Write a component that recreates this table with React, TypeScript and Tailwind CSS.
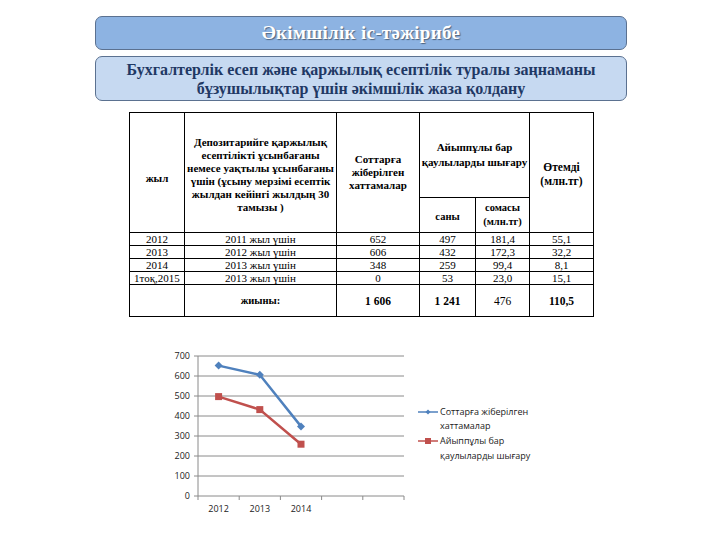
import React from "react";

const rows = [
  ["2012", "2011 жыл үшін", "652", "497", "181,4", "55,1"],
  ["2013", "2012 жыл үшін", "606", "432", "172,3", "32,2"],
  ["2014", "2013 жыл үшін", "348", "259", "99,4", "8,1"],
  ["1тоқ,2015", "2013 жыл үшін", "0", "53", "23,0", "15,1"],
];
const rowH = ["h-[12px]", "h-[13px]", "h-[12px]", "h-[13px]"];

function Chart() {
  const x0 = 38;
  const y0 = 155;
  const cw = 41.2;
  const yv = (v: number) => y0 - v * 0.2;
  const px = (i: number) => x0 + cw * i + cw / 2;
  const blue = [652, 606, 348];
  const red = [497, 432, 259];
  const grid = [0, 100, 200, 300, 400, 500, 600, 700];
  return (
    <svg width="440" height="185" viewBox="0 0 440 185" className="block font-['Open_Sans','Liberation_Sans',sans-serif]">
      {grid.map((g) => (
        <g key={g}>
          <line x1={x0} x2={244} y1={yv(g)} y2={yv(g)} stroke="#8a8a8a" strokeWidth="1" />
          <line x1={x0 - 4} x2={x0} y1={yv(g)} y2={yv(g)} stroke="#8a8a8a" strokeWidth="1" />
          <text x={30} y={yv(g) + 3} fontSize="9" textAnchor="end" fill="#222">{g}</text>
        </g>
      ))}
      <line x1={x0} x2={x0} y1={yv(700)} y2={y0} stroke="#8a8a8a" strokeWidth="1" />
      {[0, 1, 2, 3, 4, 5].map((i) => (
        <line key={i} x1={x0 + cw * i} x2={x0 + cw * i} y1={y0} y2={y0 + 4} stroke="#8a8a8a" strokeWidth="1" />
      ))}
      {["2012", "2013", "2014"].map((l, i) => (
        <text key={l} x={px(i)} y={171} fontSize="9" textAnchor="middle" fill="#222">{l}</text>
      ))}
      <polyline points={blue.map((v, i) => `${px(i)},${yv(v)}`).join(" ")} fill="none" stroke="#4f81bd" strokeWidth="2.5" />
      {blue.map((v, i) => (
        <polygon key={i} points={`${px(i)},${yv(v) - 4} ${px(i) + 4},${yv(v)} ${px(i)},${yv(v) + 4} ${px(i) - 4},${yv(v)}`} fill="#4f81bd" />
      ))}
      <polyline points={red.map((v, i) => `${px(i)},${yv(v)}`).join(" ")} fill="none" stroke="#c0504d" strokeWidth="2.5" />
      {red.map((v, i) => (
        <rect key={i} x={px(i) - 3.5} y={yv(v) - 3.5} width="7" height="7" fill="#c0504d" />
      ))}
      <line x1={258} x2={278} y1={71} y2={71} stroke="#4f81bd" strokeWidth="1.5" />
      <polygon points="268,68.5 270.5,71 268,73.5 265.5,71" fill="#4f81bd" />
      <text x={280} y={74} fontSize="9" fill="#222">Соттарға жіберілген</text>
      <text x={280} y={88} fontSize="9" fill="#222">хаттамалар</text>
      <line x1={258} x2={278} y1={100} y2={100} stroke="#c0504d" strokeWidth="1.5" />
      <rect x={265} y={97} width="6" height="6" fill="#c0504d" />
      <text x={280} y={103} fontSize="9" fill="#222">Айыппұлы бар</text>
      <text x={280} y={118} fontSize="9" fill="#222">қаулыларды шығару</text>
    </svg>
  );
}

export default function App() {
  const td = "border border-black p-0 text-center align-middle font-['Liberation_Serif','DejaVu_Serif',serif]";
  return (
    <div className="w-[720px] h-[540px] bg-white overflow-hidden flex flex-col pt-[16px] font-['Liberation_Serif','DejaVu_Serif',serif]">
      <div className="ml-[95px] w-[532px] h-[34px] rounded-[7px] border border-[#5b7190] bg-[#8db3e2] flex items-center justify-center">
        <span className="text-white font-bold text-[19px] tracking-[0.3px] [text-shadow:1px_1px_1px_rgba(0,0,0,0.45)]">
          Әкімшілік іс-тәжірибе
        </span>
      </div>
      <div className="ml-[95px] mt-[6px] w-[532px] h-[45px] rounded-[7px] border border-[#5b7190] bg-[#c6d9f1] flex flex-col items-center justify-center text-[#1f3864] font-bold text-[16px] leading-[19px]">
        <span>Бухгалтерлік есеп және қаржылық есептілік туралы заңнаманы</span>
        <span>бұзушылықтар үшін әкімшілік жаза қолдану</span>
      </div>
      <table className="ml-[129px] mt-[11px] w-[464px] table-fixed border-collapse text-black text-[11px] leading-[12px]">
        <colgroup>
          <col className="w-[55px]" />
          <col className="w-[152px]" />
          <col className="w-[83px]" />
          <col className="w-[56px]" />
          <col className="w-[54px]" />
          <col className="w-[64px]" />
        </colgroup>
        <tbody>
          <tr className="h-[85px] font-bold text-[11px] leading-[13px]">
            <td rowSpan={2} className={td}><div className="pt-[12px]">жыл</div></td>
            <td rowSpan={2} className={td}>
              <div className="pt-[4px]">
                Депозитарийге қаржылық<br />есептілікті ұсынбағаны<br />немесе уақтылы ұсынбағаны<br />үшін (ұсыну мерзімі есептік<br />жылдан кейінгі жылдың 30<br />тамызы )
              </div>
            </td>
            <td rowSpan={2} className={td}>Соттарға<br />жіберілген<br />хаттамалар</td>
            <td colSpan={2} className={td + " text-[11px] leading-[15px] whitespace-nowrap"}>Айыппұлы бар<br />қаулыларды шығару</td>
            <td rowSpan={2} className={td + " text-[11.5px] leading-[14px]"}><div className="pt-[2px]">Өтемді<br />(млн.тг)</div></td>
          </tr>
          <tr className="h-[35px] font-bold text-[10.5px] leading-[14px]">
            <td className={td}><div className="pt-[4px]">саны</div></td>
            <td className={td}>сомасы<br />(млн.тг)</td>
          </tr>
          {rows.map((r, i) => (
            <tr key={i} className={rowH[i]}>
              {r.map((c, j) => (
                <td key={j} className={td}>{c}</td>
              ))}
            </tr>
          ))}
          <tr className="h-[32px] text-[11.5px]">
            <td className={td}></td>
            <td className={td + " font-bold text-[10.5px]"}>жиыны:</td>
            <td className={td + " font-bold"}>1 606</td>
            <td className={td + " font-bold"}>1 241</td>
            <td className={td}>476</td>
            <td className={td + " font-bold"}>110,5</td>
          </tr>
        </tbody>
      </table>
      <div className="ml-[160px] mt-[24px]">
        <Chart />
      </div>
    </div>
  );
}
